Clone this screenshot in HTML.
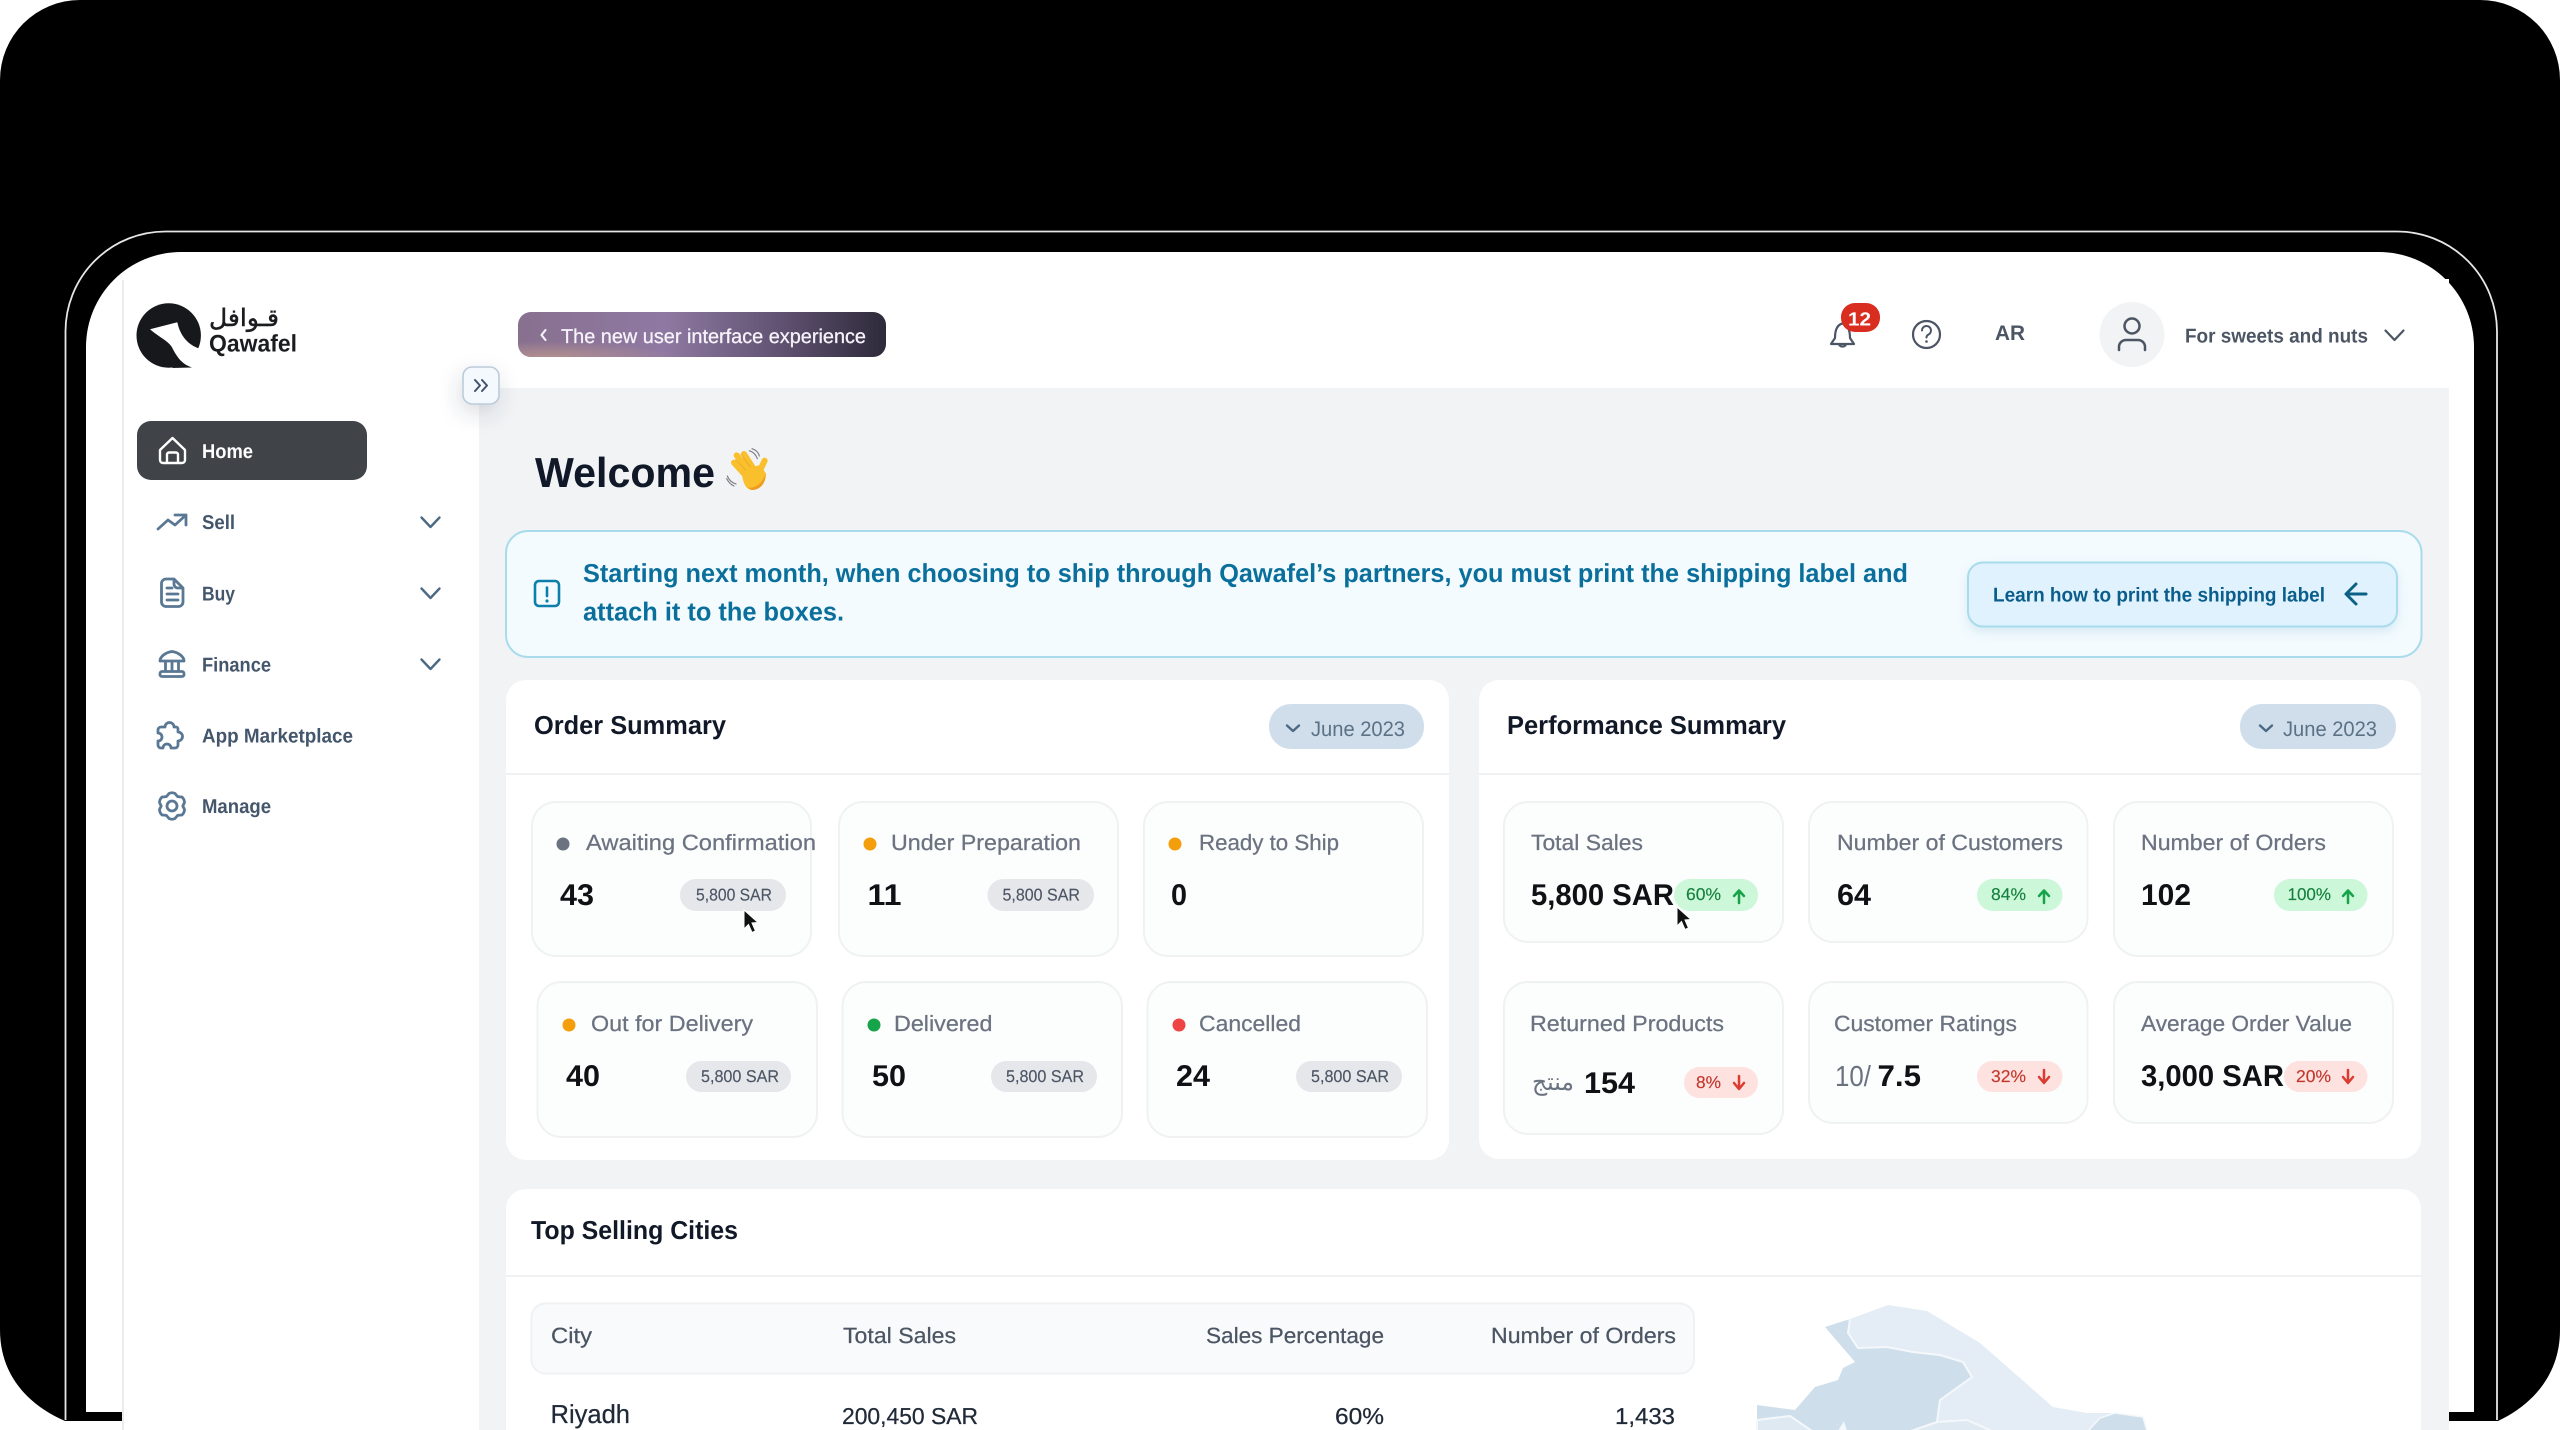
<!DOCTYPE html>
<html lang="en"><head><meta charset="utf-8"><title>Qawafel Dashboard</title>
<style>
html,body{margin:0;padding:0;background:#fff;width:2560px;height:1430px;overflow:hidden}
svg{display:block;filter:blur(.35px)}
text{font-family:"Liberation Sans","DejaVu Sans",sans-serif;text-rendering:geometricPrecision}
.t{font-size:26px;font-weight:700;fill:#111827}
.nav{font-size:20px;font-weight:700;fill:#43566b}
.lb{font-size:22px;fill:#6b7280;stroke:#6b7280;stroke-width:.25}
.n{font-size:30px;font-weight:700;fill:#0f1115}
.bt{font-size:17px;fill:#4b5563;stroke:#4b5563;stroke-width:.15}
.g{font-size:17px;fill:#15803d;stroke:#15803d;stroke-width:.15}
.r{font-size:17px;fill:#c2362c;stroke:#c2362c;stroke-width:.15}
.j{font-size:21px;fill:#5b7186}
.th{font-size:22px;fill:#4b5563;stroke:#4b5563;stroke-width:.25}
.td{font-size:23px;fill:#1f2937;stroke:#1f2937;stroke-width:.25}
.ic{fill:none;stroke:#5a7894;stroke-width:2.8;stroke-linecap:round;stroke-linejoin:round}
.st{fill:#fcfdfd;stroke:#eff1f3;stroke-width:2}
.bd{fill:#e5e7eb}.gb{fill:#ccf7d8}.rb{fill:#fde2e0}
.up{fill:none;stroke:#16a34a;stroke-width:2.5;stroke-linecap:round;stroke-linejoin:round}
.dn{fill:none;stroke:#dc3b30;stroke-width:2.5;stroke-linecap:round;stroke-linejoin:round}
.ch{fill:none;stroke:#4d6a85;stroke-width:2.4;stroke-linecap:round;stroke-linejoin:round}
</style></head>
<body>
<svg xmlns="http://www.w3.org/2000/svg" width="2560" height="1430" viewBox="0 0 2560 1430">
<defs>
<linearGradient id="pg" x1="0" y1="0" x2="1" y2="0"><stop offset="0" stop-color="#88708f"/><stop offset=".4" stop-color="#8f79a2"/><stop offset=".72" stop-color="#5f5170"/><stop offset="1" stop-color="#2d2a3a"/></linearGradient>
<radialGradient id="pp" cx=".08" cy="1" r=".35"><stop offset="0" stop-color="#c09a8e" stop-opacity=".75"/><stop offset="1" stop-color="#c09a8e" stop-opacity="0"/></radialGradient>
<filter id="sh" x="-100%" y="-100%" width="300%" height="300%"><feDropShadow dx="-2" dy="8" stdDeviation="10" flood-color="#3a4a5a" flood-opacity=".18"/></filter>
<filter id="sb" x="-10%" y="-30%" width="120%" height="170%"><feDropShadow dx="0" dy="5" stdDeviation="5" flood-color="#5a9ab8" flood-opacity=".18"/></filter>
</defs>

<!-- device frame -->
<rect width="2560" height="1430" fill="#fff"/>
<path d="M80,0H2480A80,80 0 0 1 2560,80V1330C2560,1375 2532,1405 2498,1421H65C28,1405 0,1375 0,1330V80A80,80 0 0 1 80,0Z" fill="#000"/>
<path d="M65.5,1420V331.5A100,100 0 0 1 165.5,231.5H2397A100,100 0 0 1 2497,331.5V1420" fill="none" stroke="#e6e6e6" stroke-width="1.8"/>
<path d="M86,1412V347A95,95 0 0 1 181,252H2379A95,95 0 0 1 2474,347V1412Z" fill="#fff"/>
<rect x="122" y="1421" width="2330" height="9" fill="#fff"/>
<rect x="124" y="279" width="2325" height="1151" fill="#fff"/>
<rect x="122" y="280" width="2" height="1150" fill="#e9ebee"/>

<!-- main background -->
<rect x="479" y="388" width="1970" height="1042" fill="#f1f3f5"/>

<!-- logo -->
<g>
<circle cx="168.7" cy="335.5" r="32.2" fill="#17181b"/>
<path d="M181,362L192,367.5L172,368Z" fill="#17181b"/>
<path d="M150,329.3L177.3,322.3C179.3,331.7 185,345 201.7,349.3L203.3,370L191.7,367.3C181.7,364 176.7,356.7 171.7,346.7C166.7,340 158.3,336.7 150,329.3Z" fill="#fff"/>
<text x="209" y="326" font-size="24" style="font-family:'DejaVu Sans',sans-serif" fill="#1b1c20" stroke="#1b1c20" stroke-width=".5" textLength="70" lengthAdjust="spacingAndGlyphs">قـوافل</text>
<text x="209" y="351.7" font-size="24" font-weight="700" fill="#1b1c20" textLength="88" lengthAdjust="spacingAndGlyphs">Qawafel</text>
</g>

<!-- collapse -->
<rect x="463" y="367" width="36" height="37" rx="9" fill="#f4f9fd" stroke="#bccbda" stroke-width="1.6" filter="url(#sh)"/>
<path d="M475,380L480,385.5L475,391M482,380L487,385.5L482,391" fill="none" stroke="#42526b" stroke-width="2" stroke-linecap="round" stroke-linejoin="round"/>

<!-- sidebar -->
<rect x="137" y="421" width="230" height="59" rx="14" fill="#404347"/>
<path d="M160,450L172.5,438L185,450V460a3,3 0 0 1 -3,3H163a3,3 0 0 1 -3,-3ZM167,463V454.5a2,2 0 0 1 2,-2h7a2,2 0 0 1 2,2V463" fill="none" stroke="#fff" stroke-width="2.4" stroke-linejoin="round"/>
<text x="202" y="458" font-size="20" font-weight="700" fill="#fff" textLength="51" lengthAdjust="spacingAndGlyphs">Home</text>

<path class="ic" d="M158,529L168,520L175,525L186,515M175,515H186V525"/>
<text class="nav" x="202" y="529" textLength="33" lengthAdjust="spacingAndGlyphs">Sell</text>
<path class="ch" d="M421.5,517.5L430.5,527L439.5,517.5"/>

<path class="ic" d="M166,579H174L183,588V602a4.5,4.5 0 0 1 -4.5,4.5H166a4.5,4.5 0 0 1 -4.5,-4.5V583.5a4.5,4.5 0 0 1 4.5,-4.5ZM174,579V584a4,4 0 0 0 4,4H183M167,588H172M167,594H178M167,600H178"/>
<text class="nav" x="202" y="600.7" textLength="33" lengthAdjust="spacingAndGlyphs">Buy</text>
<path class="ch" d="M421.5,588.5L430.5,598L439.5,588.5"/>

<path class="ic" d="M160,661C160,657 165,652.5 172,651.5C179,652.5 184,657 184,661ZM165.5,662V671M172,662V671M178.5,662V671"/>
<rect class="ic" x="160" y="671.5" width="24" height="5" rx="2"/>
<text class="nav" x="202" y="671.7" textLength="69" lengthAdjust="spacingAndGlyphs">Finance</text>
<path class="ch" d="M421.5,659.5L430.5,669L439.5,659.5"/>

<path class="ic" d="M162,727H165a4.5,4.5 0 1 1 9,0H176a2,2 0 0 1 2,2V732a4.5,4.5 0 1 1 0,9V745a3,3 0 0 1 -3,3H171a4,4 0 0 0 -8,0H161a3,3 0 0 1 -3,-3V741a4,4 0 0 0 0,-8V730a3,3 0 0 1 3,-3Z"/>
<text class="nav" x="202" y="742.7" textLength="151" lengthAdjust="spacingAndGlyphs">App Marketplace</text>

<path class="ic" d="M169,793.5C171,792.5 173,792.5 175,793.5L177.5,796.5C179.5,797 181,797 182,797C184,799 184.5,801 184.5,802.5L182.8,806L184.5,809.5C184.5,811 184,813 182,815C181,815 179.5,815 177.5,815.5L175,818.5C173,819.5 171,819.5 169,818.5L166.5,815.5C164.5,815 163,815 162,815C160,813 159.5,811 159.5,809.5L161.2,806L159.500,802.500C159.5,801 160,799 162,797C163,797 164.5,797 166.5,796.5Z"/>
<circle class="ic" cx="172" cy="806" r="5"/>
<text class="nav" x="202" y="813" textLength="69" lengthAdjust="spacingAndGlyphs">Manage</text>

<!-- top bar -->
<rect x="518" y="312" width="368" height="45" rx="13" fill="url(#pg)"/>
<rect x="518" y="312" width="368" height="45" rx="13" fill="url(#pp)"/>
<path d="M545.5,330L541.5,335L545.5,340" fill="none" stroke="#f4f0f8" stroke-width="2.2" stroke-linecap="round" stroke-linejoin="round"/>
<text x="561" y="343" font-size="20" fill="#f6f2f9" stroke="#f6f2f9" stroke-width=".3" textLength="305" lengthAdjust="spacingAndGlyphs">The new user interface experience</text>

<path d="M1842.5,323.5C1836,325 1835,332 1835,338L1831,344H1854L1850,338C1850,332 1849,325 1842.5,323.5ZM1839,344.5a4,4 0 0 0 7,0" fill="none" stroke="#4b5563" stroke-width="2.2" stroke-linejoin="round"/>
<rect x="1841" y="303" width="39" height="29" rx="14" fill="#d92d20"/>
<text x="1848" y="325.7" font-size="19" font-weight="700" fill="#fff" textLength="23" lengthAdjust="spacingAndGlyphs">12</text>
<circle cx="1926.5" cy="334.5" r="13.5" fill="none" stroke="#4b5563" stroke-width="2.2"/>
<path d="M1922,330.5a4.5,4.5 0 1 1 6.5,4c-1.5,.8 -2,1.5 -2,3" fill="none" stroke="#4b5563" stroke-width="2" stroke-linecap="round"/>
<circle cx="1926.5" cy="341.5" r="1.3" fill="#4b5563"/>
<text x="1995" y="340" font-size="21" font-weight="700" fill="#4b5563" textLength="30" lengthAdjust="spacingAndGlyphs">AR</text>
<circle cx="2132" cy="334.5" r="32.5" fill="#f1f3f5"/>
<circle cx="2132" cy="326" r="7.5" fill="none" stroke="#4b5563" stroke-width="2.5"/>
<path d="M2119,350V347a7,7 0 0 1 7,-7h12a7,7 0 0 1 7,7V350" fill="none" stroke="#4b5563" stroke-width="2.5" stroke-linecap="round"/>
<text x="2185" y="342.5" font-size="20" font-weight="700" fill="#4b5563" textLength="183" lengthAdjust="spacingAndGlyphs">For sweets and nuts</text>
<path d="M2385.5,330.5L2394.5,340L2403.5,330.5" fill="none" stroke="#4b5563" stroke-width="2.2" stroke-linecap="round" stroke-linejoin="round"/>

<!-- welcome -->
<text x="535" y="487" font-size="42" font-weight="700" fill="#111827" textLength="180" lengthAdjust="spacingAndGlyphs">Welcome</text>
<g transform="translate(710,430) scale(.3333)">
<g fill="none" stroke="#7d7f82" stroke-width="3.5" stroke-linecap="round"><path d="M118,62C130,66 138,74 142,86M126,56C138,60 146,68 148,78M52,138C56,148 64,158 78,162M50,146C54,154 62,164 72,168"/></g>
<g fill="none" stroke="#f9bf2c" stroke-width="18" stroke-linecap="round"><path d="M72,98L112,142M80,76L122,128M102,72L134,122M164,92L148,126"/></g>
<path d="M96,120L150,105L168,130C168,160 150,180 125,180C105,178 95,150 96,120Z" fill="#f9bf2c"/>
<path d="M76,88L108,122M92,72L122,112" fill="none" stroke="#e8a21f" stroke-width="2"/>
<path d="M112,172C135,178 158,160 166,132C168,160 150,180 125,180Z" fill="#ee9b1f"/>
</g>

<!-- banner -->
<rect x="506" y="531" width="1915.5" height="126" rx="22" fill="#f3fbff" stroke="#a8dbec" stroke-width="2"/>
<rect x="535" y="581" width="24" height="25" rx="4" fill="none" stroke="#0e7fab" stroke-width="2.6"/>
<path d="M547,587.5V596" stroke="#0e7fab" stroke-width="2.6" stroke-linecap="round"/>
<circle cx="547" cy="601" r="1.6" fill="#0e7fab"/>
<text x="583" y="582" font-size="26" font-weight="700" fill="#0b6f9c" textLength="1325" lengthAdjust="spacingAndGlyphs">Starting next month, when choosing to ship through Qawafel’s partners, you must print the shipping label and</text>
<text x="583" y="620.5" font-size="26" font-weight="700" fill="#0b6f9c" textLength="261" lengthAdjust="spacingAndGlyphs">attach it to the boxes.</text>
<rect x="1968" y="562.5" width="429" height="64" rx="15" fill="#e0f2fe" stroke="#a8dbec" stroke-width="2" filter="url(#sb)"/>
<text x="1993" y="601.5" font-size="20" font-weight="700" fill="#0b5e8c" textLength="332" lengthAdjust="spacingAndGlyphs">Learn how to print the shipping label</text>
<path d="M2366,594H2347M2356,584L2346,594L2356,604" fill="none" stroke="#0b6087" stroke-width="3" stroke-linecap="round" stroke-linejoin="round"/>

<!-- order summary -->
<rect x="506" y="680" width="943" height="480" rx="20" fill="#fff"/>
<rect x="506" y="773" width="943" height="2" fill="#f0f1f3"/>
<text class="t" x="534" y="734" textLength="192" lengthAdjust="spacingAndGlyphs">Order Summary</text>
<rect x="1269" y="704" width="155" height="45" rx="22" fill="#d0deeb"/>
<path class="ch" d="M1287,725.5L1293,731L1299,725.5"/>
<text class="j" x="1311" y="736" textLength="94" lengthAdjust="spacingAndGlyphs">June 2023</text>

<rect class="st" x="532" y="802" width="279" height="154" rx="24"/>
<rect class="st" x="839" y="802" width="279" height="154" rx="24"/>
<rect class="st" x="1144" y="802" width="279" height="154" rx="24"/>
<rect class="st" x="537.5" y="982" width="279.5" height="155" rx="24"/>
<rect class="st" x="842.5" y="982" width="279.5" height="155" rx="24"/>
<rect class="st" x="1147.5" y="982" width="279.5" height="155" rx="24"/>

<circle cx="563" cy="844" r="6.5" fill="#6b7280"/>
<text class="lb" x="586" y="850" textLength="230" lengthAdjust="spacingAndGlyphs">Awaiting Confirmation</text>
<text class="n" x="560" y="905" textLength="34" lengthAdjust="spacingAndGlyphs">43</text>
<rect class="bd" x="680" y="879" width="106" height="32" rx="16"/>
<text class="bt" x="696" y="900.7" textLength="76" lengthAdjust="spacingAndGlyphs">5,800 SAR</text>

<circle cx="870" cy="844" r="6.5" fill="#f59e0b"/>
<text class="lb" x="891" y="850" textLength="190" lengthAdjust="spacingAndGlyphs">Under Preparation</text>
<text class="n" x="867.5" y="905" textLength="34" lengthAdjust="spacingAndGlyphs">11</text>
<rect class="bd" x="987.5" y="879" width="106.5" height="32" rx="16"/>
<text class="bt" x="1002.5" y="900.7" textLength="77.5" lengthAdjust="spacingAndGlyphs">5,800 SAR</text>

<circle cx="1175" cy="844" r="6.5" fill="#f59e0b"/>
<text class="lb" x="1199" y="850" textLength="140" lengthAdjust="spacingAndGlyphs">Ready to Ship</text>
<text class="n" x="1171" y="905" textLength="16" lengthAdjust="spacingAndGlyphs">0</text>

<circle cx="569" cy="1025" r="6.5" fill="#f59e0b"/>
<text class="lb" x="591" y="1031" textLength="162" lengthAdjust="spacingAndGlyphs">Out for Delivery</text>
<text class="n" x="566" y="1086" textLength="34" lengthAdjust="spacingAndGlyphs">40</text>
<rect class="bd" x="686" y="1061" width="105" height="31" rx="15.5"/>
<text class="bt" x="701" y="1082" textLength="78" lengthAdjust="spacingAndGlyphs">5,800 SAR</text>

<circle cx="874" cy="1025" r="6.5" fill="#16a34a"/>
<text class="lb" x="894" y="1031" textLength="98.5" lengthAdjust="spacingAndGlyphs">Delivered</text>
<text class="n" x="872" y="1086" textLength="34" lengthAdjust="spacingAndGlyphs">50</text>
<rect class="bd" x="991" y="1061" width="106" height="31" rx="15.5"/>
<text class="bt" x="1006" y="1082" textLength="78" lengthAdjust="spacingAndGlyphs">5,800 SAR</text>

<circle cx="1179" cy="1025" r="6.5" fill="#ef4444"/>
<text class="lb" x="1199" y="1031" textLength="102" lengthAdjust="spacingAndGlyphs">Cancelled</text>
<text class="n" x="1176" y="1086" textLength="34" lengthAdjust="spacingAndGlyphs">24</text>
<rect class="bd" x="1296" y="1061" width="106" height="31" rx="15.5"/>
<text class="bt" x="1311" y="1082" textLength="78" lengthAdjust="spacingAndGlyphs">5,800 SAR</text>

<path d="M744,910V929L748.5,924.5L752,932.5L755.5,931L752,923L758,922.5Z" fill="#111" stroke="#fff" stroke-width="1"/>

<!-- performance summary -->
<rect x="1479" y="680" width="942" height="479" rx="20" fill="#fff"/>
<rect x="1479" y="773" width="942" height="2" fill="#f0f1f3"/>
<text class="t" x="1507" y="734" textLength="279" lengthAdjust="spacingAndGlyphs">Performance Summary</text>
<rect x="2240" y="704" width="156" height="45" rx="22" fill="#d0deeb"/>
<path class="ch" d="M2260,725.5L2266,731L2272,725.5"/>
<text class="j" x="2283" y="736" textLength="94" lengthAdjust="spacingAndGlyphs">June 2023</text>

<rect class="st" x="1504" y="802" width="279" height="140" rx="24"/>
<rect class="st" x="1809" y="802" width="278.5" height="140" rx="24"/>
<rect class="st" x="2114" y="802" width="279" height="154" rx="24"/>
<rect class="st" x="1504" y="982" width="279" height="152" rx="24"/>
<rect class="st" x="1809" y="982" width="278.5" height="141" rx="24"/>
<rect class="st" x="2114" y="982" width="279" height="141" rx="24"/>

<text class="lb" x="1531" y="850" textLength="112" lengthAdjust="spacingAndGlyphs">Total Sales</text>
<text class="n" x="1531" y="905" textLength="143" lengthAdjust="spacingAndGlyphs">5,800 SAR</text>
<rect class="gb" x="1674" y="879" width="84" height="32" rx="16"/>
<text class="g" x="1686" y="900" textLength="35" lengthAdjust="spacingAndGlyphs">60%</text>
<path class="up" d="M1739,903V891M1734,896L1739,890.5L1744,896"/>

<text class="lb" x="1837" y="850" textLength="226" lengthAdjust="spacingAndGlyphs">Number of Customers</text>
<text class="n" x="1837" y="905" textLength="34" lengthAdjust="spacingAndGlyphs">64</text>
<rect class="gb" x="1977" y="879" width="85.5" height="32" rx="16"/>
<text class="g" x="1991" y="900" textLength="35" lengthAdjust="spacingAndGlyphs">84%</text>
<path class="up" d="M2044,903V891M2039,896L2044,890.5L2049,896"/>

<text class="lb" x="2141" y="850" textLength="185" lengthAdjust="spacingAndGlyphs">Number of Orders</text>
<text class="n" x="2141" y="905" textLength="50" lengthAdjust="spacingAndGlyphs">102</text>
<rect class="gb" x="2274" y="879" width="93.5" height="32" rx="16"/>
<text class="g" x="2287.5" y="900" textLength="43.5" lengthAdjust="spacingAndGlyphs">100%</text>
<path class="up" d="M2348,903V891M2343,896L2348,890.5L2353,896"/>

<text class="lb" x="1530" y="1031" textLength="194" lengthAdjust="spacingAndGlyphs">Returned Products</text>
<text x="1532" y="1090" font-size="24" fill="#6b7280" style="font-family:'DejaVu Sans',sans-serif" textLength="42" lengthAdjust="spacingAndGlyphs">منتج</text>
<text class="n" x="1584" y="1093" textLength="51" lengthAdjust="spacingAndGlyphs">154</text>
<rect class="rb" x="1684" y="1067" width="74" height="31" rx="15.5"/>
<text class="r" x="1696" y="1088" textLength="25" lengthAdjust="spacingAndGlyphs">8%</text>
<path class="dn" d="M1739,1076V1088M1734,1083L1739,1089L1744,1083"/>

<text class="lb" x="1834" y="1031" textLength="183" lengthAdjust="spacingAndGlyphs">Customer Ratings</text>
<text x="1835" y="1086" font-size="29" fill="#6b7280" textLength="36" lengthAdjust="spacingAndGlyphs">10/</text>
<text class="n" x="1877.5" y="1086" textLength="43.5" lengthAdjust="spacingAndGlyphs">7.5</text>
<rect class="rb" x="1977" y="1061" width="85.5" height="31" rx="15.5"/>
<text class="r" x="1991" y="1082" textLength="35" lengthAdjust="spacingAndGlyphs">32%</text>
<path class="dn" d="M2044,1070V1082M2039,1077L2044,1083L2049,1077"/>

<text class="lb" x="2141" y="1031" textLength="211" lengthAdjust="spacingAndGlyphs">Average Order Value</text>
<rect class="rb" x="2284" y="1061" width="83.5" height="31" rx="15.5"/>
<text class="n" x="2141" y="1086" textLength="143" lengthAdjust="spacingAndGlyphs">3,000 SAR</text>
<text class="r" x="2296" y="1082" textLength="35" lengthAdjust="spacingAndGlyphs">20%</text>
<path class="dn" d="M2348,1070V1082M2343,1077L2348,1083L2353,1077"/>

<path d="M1677,907V926L1681.5,921.5L1685,929.5L1688.5,928L1685,920L1691,919.5Z" fill="#111" stroke="#fff" stroke-width="1"/>

<!-- top selling cities -->
<path d="M506,1430V1209a20,20 0 0 1 20,-20H2401a20,20 0 0 1 20,20V1430Z" fill="#fff"/>
<rect x="506" y="1275" width="1915" height="2" fill="#f0f1f3"/>
<text class="t" x="531" y="1239" textLength="207" lengthAdjust="spacingAndGlyphs">Top Selling Cities</text>
<rect x="531.5" y="1303.5" width="1162.5" height="70" rx="14" fill="#f9fafb" stroke="#f0f1f3" stroke-width="2"/>
<text class="th" x="551" y="1343" textLength="41" lengthAdjust="spacingAndGlyphs">City</text>
<text class="th" x="843" y="1343" textLength="113" lengthAdjust="spacingAndGlyphs">Total Sales</text>
<text class="th" x="1206" y="1343" textLength="178" lengthAdjust="spacingAndGlyphs">Sales Percentage</text>
<text class="th" x="1491" y="1343" textLength="185" lengthAdjust="spacingAndGlyphs">Number of Orders</text>
<text x="550.5" y="1423" font-size="26" fill="#1f2937" stroke="#1f2937" stroke-width=".25" textLength="79.5" lengthAdjust="spacingAndGlyphs">Riyadh</text>
<text class="td" x="842" y="1424" textLength="136" lengthAdjust="spacingAndGlyphs">200,450 SAR</text>
<text class="td" x="1335" y="1424" textLength="49" lengthAdjust="spacingAndGlyphs">60%</text>
<text class="td" x="1615" y="1424" textLength="60" lengthAdjust="spacingAndGlyphs">1,433</text>

<!-- map -->
<g stroke-linejoin="round">
<path d="M1850,1319L1888,1305L1927,1311L1980,1343L2053,1407L2087,1413L2115,1413L2143,1417L2147,1430H1910L1937,1422L1940,1400L1972,1377L1963,1362L1940,1355L1913,1352L1887,1347L1858,1348L1848,1333Z" fill="#e4edf5"/>
<path d="M1825,1327L1850,1319L1848,1333L1858,1348L1887,1347L1913,1352L1940,1355L1963,1362L1972,1377L1940,1400L1937,1422L1913,1430H1757V1405L1795,1410L1815,1387L1838,1380L1843,1368L1855,1362Z" fill="#cfdeeb"/>
<path d="M1850,1319L1848,1333L1858,1348L1887,1347L1913,1352L1940,1355L1963,1362L1972,1377L1940,1400L1937,1422" fill="none" stroke="#f4f8fb" stroke-width="2"/>
<path d="M1757,1420L1790,1416L1812,1431H1757Z" fill="#dfe9f2" stroke="#f4f8fb" stroke-width="2"/>
<path d="M1911,1431L1937,1422L1967,1420L1992,1431Z" fill="#dfe9f2" stroke="#f4f8fb" stroke-width="2"/>
<path d="M1838,1431L1844,1421L1847,1431Z" fill="#f4f8fb"/>
<path d="M2088,1431L2100,1418L2115,1413L2143,1417L2147,1431Z" fill="#cfdeeb" stroke="#f4f8fb" stroke-width="1.5"/>
</g>
</svg>
</body></html>
